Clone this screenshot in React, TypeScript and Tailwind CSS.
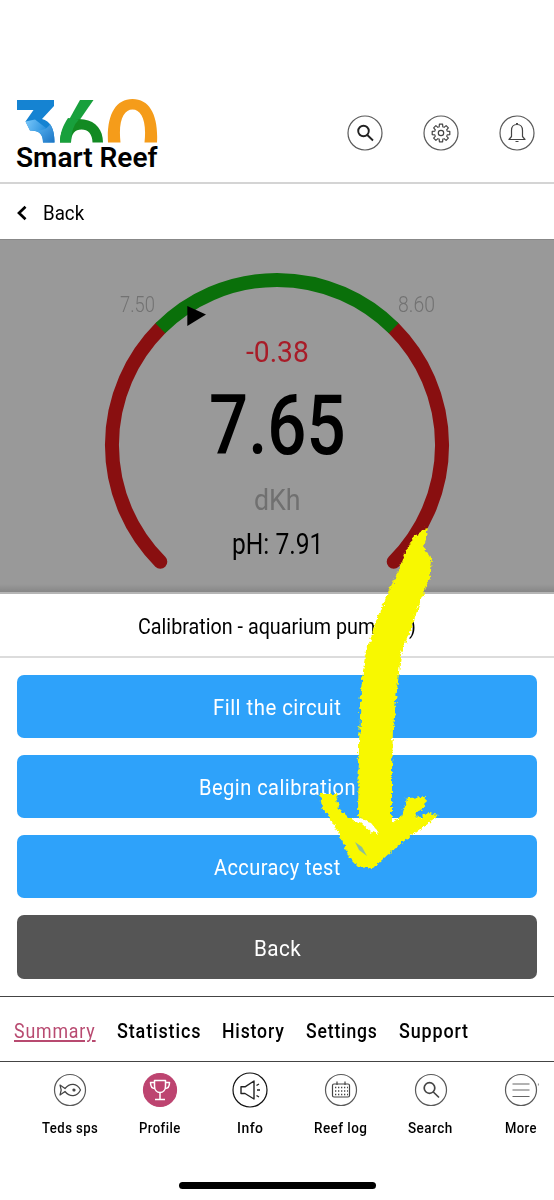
import { useLayoutEffect, useRef, useState } from "react";
import type { ReactNode } from "react";
import clsx from "clsx";

type FitTextProps = {
  className?: string;
  textClassName?: string;
  children: string;
};

// Squeezes one line of text into the width of its box
const FitText = ({ className, textClassName, children }: FitTextProps) => {
  const boxRef = useRef<HTMLSpanElement>(null);
  const textRef = useRef<HTMLSpanElement>(null);
  const [scale, setScale] = useState(1);

  useLayoutEffect(() => {
    if (!boxRef.current || !textRef.current) return;
    setScale(boxRef.current.clientWidth / textRef.current.offsetWidth);
  }, [children]);

  return (
    <span ref={boxRef} className={clsx("block shrink-0 whitespace-nowrap", className)}>
      <span
        ref={textRef}
        className={clsx("inline-block origin-left", textClassName)}
        style={{ transform: `scaleX(${scale})` }}
      >
        {children}
      </span>
    </span>
  );
};

const Logo = () => (
  <svg width="142" height="44" viewBox="16 99 142 44">
    <defs>
      <linearGradient id="spur" x1="0" y1="0" x2="1" y2="0.300">
        <stop offset="0" stopColor="#7cc8fa" />
        <stop offset="1" stopColor="#2f95e0" />
      </linearGradient>
      <linearGradient id="bowl" x1="0" y1="0" x2="1" y2="1">
        <stop offset="0" stopColor="#5db8f4" />
        <stop offset="1" stopColor="#1b74c4" />
      </linearGradient>
    </defs>
    <path d="M17 100H54V106L42 119C50 121 54.500 128 54.500 142.500H43C43 135 40 130.500 30 130.500L25.500 121.500L33.500 110H17Z" fill="#1583d2" />
    <path d="M25.500 121.500L35 119.500L46 128L41 134C39 131.500 36 130.500 30 130.500Z" fill="url(#spur)" />
    <path d="M35 131C44 131 49 127 50 124C53.500 129 54.500 135 54.500 142.500H43C43 136 41 132 35 131Z" fill="url(#bowl)" />
    <path d="M80 100H93.500L80 119.500L66 125Z" fill="#18a03c" />
    <path d="M60 142.500C60 133 64 126 69 121.500Q75 118 84 119.500C96 121 103 130 103 142.500H92.500C92.500 134 88 129.500 81.500 129.500S71 134 71 142.500Z" fill="#138a22" />
    <path d="M60 142.500C60 133 63 125.500 68 118L79 119.500Q71 127 71 142.500Z" fill="#18a03c" />
    <path d="M108 142.500C106.500 116 115 99 132.500 99S158.500 116 157 142.500H144.500C147 120 141 109.500 132.500 109.500S118 120 120.500 142.500Z" fill="#f59c1a" />
  </svg>
);

const SearchGlyph = () => (
  <>
    <circle cx="-1.500" cy="-2" r="5.300" />
    <path d="M2.300 2L8 7.500" />
  </>
);

const teeth = [0, 45, 90, 135, 180, 225, 270, 315];

const GearGlyph = () => (
  <>
    <circle r="2.700" />
    {teeth.map((angle) => (
      <path
        key={angle}
        transform={`rotate(${angle})`}
        d="M-2.500 -6L-1.800 -6.200L-1.600 -8.800H1.600L1.800 -6.200L2.500 -6"
      />
    ))}
  </>
);

const BellGlyph = () => (
  <>
    <path d="M-8 6.500H8L5.500 3.500V-2.500C5.500 -6 3.500 -8.500 0 -8.500S-5.500 -6 -5.500 -2.500V3.500Z" />
    <path d="M-1 -9.300H1M-1.500 8.500H1.500" />
  </>
);

const FishGlyph = () => (
  <>
    <path d="M-5 -1.500C0 -7.500 7 -7 10.500 0C7 7 0 7.500 -5 1.500L-10 5L-8.800 0L-10 -5Z" />
    <circle cx="4" cy="0" r="1" fill="#333" />
  </>
);

const TrophyGlyph = () => (
  <>
    <path d="M-5.500 -9.500H5.500V-4C5.500 0 3 2.500 0 2.500S-5.500 0 -5.500 -4Z" />
    <path d="M-5.500 -7.500H-9.500C-9.500 -3.500 -8 -1.500 -5 -1.500M5.500 -7.500H9.500C9.500 -3.500 8 -1.500 5 -1.500M0 2.500V9M-5 9.500H5" />
  </>
);

const SpeakerGlyph = () => (
  <>
    <path d="M-9 -3.200H-5L4 -9V9L-5 3.500H-9Z" />
    <path d="M6.500 -4.500L9 -6M7 0H10M6.500 5.500L9 7" />
  </>
);

const CalendarGlyph = () => (
  <>
    <rect x="-8.500" y="-6" width="17" height="13" rx="1.500" />
    <path d="M-4 -8.500V-5M4 -8.500V-5" />
    <path d="M-6 -2.500H7M-6 1H7M-6 4.500H7" strokeDasharray="1.300 1.700" strokeWidth="1.500" />
  </>
);

const MenuGlyph = () => <path d="M-8.500 -6H8.500M-8.500 0H8.500M-8.500 6.500H8.500" />;

type RoundIconProps = {
  children: ReactNode;
  r?: number;
  stroke?: string;
  fill?: string;
  glyph?: string;
  glyphWidth?: number;
};

const RoundIcon = ({
  children,
  r = 17,
  stroke = "#5a5a5a",
  fill = "none",
  glyph = "#444",
  glyphWidth = 1.2,
}: RoundIconProps) => (
  <svg width="36" height="36" viewBox="-18 -18 36 36" className="shrink-0">
    <circle r={r} fill={fill} stroke={stroke} strokeWidth="1.200" />
    <g fill="none" stroke={glyph} strokeWidth={glyphWidth} strokeLinejoin="round">
      {children}
    </g>
  </svg>
);

const Header = () => (
  <header className="flex h-[184px] items-start justify-between border-b-2 border-[#d4d4d4] pr-[19px] pl-4 pt-[99px]">
    <div>
      <Logo />
      <FitText className="w-[141px] text-[28px] leading-[30px] font-semibold">Smart Reef</FitText>
    </div>
    <div className="flex gap-10 pt-4">
      <RoundIcon glyph="#222" glyphWidth={1.9}>
        <SearchGlyph />
      </RoundIcon>
      <RoundIcon>
        <GearGlyph />
      </RoundIcon>
      <RoundIcon>
        <BellGlyph />
      </RoundIcon>
    </div>
  </header>
);

const BackRow = () => (
  <div className="flex h-[55px] items-center pl-[17px]">
    <svg width="10" height="16" viewBox="0 0 10 16" className="mt-0.5 mr-4">
      <path d="M8.500 1.800L2 8L8.500 14.200" fill="none" stroke="#000" strokeWidth="2.700" />
    </svg>
    <FitText className="mt-0.5 w-[41px] text-[21px] leading-7">Back</FitText>
  </div>
);

const Gauge = () => (
  <section className="grid h-[355px] border-t border-b-2 border-t-[#888] border-b-[#b5b5b5] bg-[#999]">
    <svg width="554" height="352" viewBox="0 240 554 352" className="col-start-1 row-start-1">
      <defs>
        <linearGradient id="edge" x1="0" y1="0" x2="0" y2="1">
          <stop offset="0" stopColor="#000" stopOpacity="0" />
          <stop offset="1" stopColor="#000" stopOpacity="0.120" />
        </linearGradient>
      </defs>
      <rect x="0" y="584" width="554" height="8" fill="url(#edge)" />
      <g fill="none" strokeWidth="14">
        <path d="M160.300 561.700A165 165 0 0 1 160.300 328.300" stroke="#890f10" strokeLinecap="round" />
        <path d="M393.700 561.700A165 165 0 0 0 393.700 328.300" stroke="#890f10" strokeLinecap="round" />
        <path d="M160.300 328.300A165 165 0 0 1 393.700 328.300" stroke="#0a700a" />
      </g>
      <path d="M187.300 306V326L206 314.500Z" />
    </svg>
    <div className="col-start-1 row-start-1 flex flex-col items-center pt-[50px]">
      <div className="flex w-[315px] justify-between text-[22px] leading-[29px] font-light text-[#727272]">
        <FitText className="w-[35px]">7.50</FitText>
        <FitText className="w-[37px]">8.60</FitText>
      </div>
      <FitText className="mt-[15px] w-[63px] text-[30px] leading-[36px] text-[#a81c28]">-0.38</FitText>
      <FitText className="mt-[8px] w-[137px] text-[84px] leading-[96px]" textClassName="font-medium">
        7.65
      </FitText>
      <FitText className="mt-[8px] w-[47px] text-[29px] leading-[36px] text-[#707070]">dKh</FitText>
      <FitText className="mt-[8px] w-[91px] text-[30px] leading-[36px]">pH: 7.91</FitText>
    </div>
  </section>
);

const actions = [
  { label: "Fill the circuit", width: "w-[128px]", color: "bg-[#2ea2fa]" },
  { label: "Begin calibration", width: "w-[157px]", color: "bg-[#2ea2fa]" },
  { label: "Accuracy test", width: "w-[127px]", color: "bg-[#2ea2fa]" },
  { label: "Back", width: "w-[47px]", color: "bg-[#555]" },
];

const ActionSheet = () => (
  <section>
    <div className="flex h-[64px] justify-center border-b-2 border-[#dcdcdc] pt-[18px]">
      <FitText className="w-[278px] text-[22px] leading-[29px]">Calibration - aquarium pump (b)</FitText>
    </div>
    <div className="flex flex-col gap-[17px] px-[17px] pt-[16.500px] pb-[17px]">
      {actions.map(({ label, width, color }) => (
        <button
          key={label}
          className={clsx("flex h-[63.300px] items-center justify-center rounded-[7px] text-white", color)}
        >
          <FitText className={clsx("mt-[3px] text-[22px] leading-[28px] tracking-[0.500px]", width)}>
            {label}
          </FitText>
        </button>
      ))}
    </div>
  </section>
);

const tabs = [
  { label: "Summary", width: "w-[82px]", active: true },
  { label: "Statistics", width: "w-[84px]" },
  { label: "History", width: "w-[63px]" },
  { label: "Settings", width: "w-[72px]" },
  { label: "Support", width: "w-[70px]" },
];

const Tabs = () => (
  <nav className="flex h-[66px] items-center gap-[21px] border-y border-[#444] pt-1 pl-3.5 text-[21px] leading-[28px] tracking-[1px]">
    {tabs.map(({ label, width, active }) => (
      <FitText
        key={label}
        className={clsx(width, active ? "text-[#b84a70]" : "font-medium")}
        textClassName={active ? "underline decoration-2 underline-offset-2" : undefined}
      >
        {label}
      </FitText>
    ))}
  </nav>
);

type BottomItemProps = {
  label: string;
  width: string;
  children: ReactNode;
};

const BottomItem = ({ label, width, children }: BottomItemProps) => (
  <div className="flex w-[90.200px] shrink-0 flex-col items-center">
    {children}
    <FitText className={clsx("mt-[10px] text-[15px] leading-5 font-medium tracking-[0.5px]", width)}>
      {label}
    </FitText>
  </div>
);

const BottomBar = () => (
  <nav className="flex h-[120px] overflow-hidden pt-[10px] pl-[25px]">
    <BottomItem label="Teds sps" width="w-[56px]">
      <RoundIcon r={15.5}>
        <FishGlyph />
      </RoundIcon>
    </BottomItem>
    <BottomItem label="Profile" width="w-[42px]">
      <RoundIcon r={16.5} stroke="#bd4470" fill="#bd4470" glyph="#fff" glyphWidth={1.5}>
        <TrophyGlyph />
      </RoundIcon>
    </BottomItem>
    <BottomItem label="Info" width="w-[26px]">
      <RoundIcon r={17} stroke="#111" glyph="#222" glyphWidth={1.4}>
        <SpeakerGlyph />
      </RoundIcon>
    </BottomItem>
    <BottomItem label="Reef log" width="w-[53px]">
      <RoundIcon r={15.5}>
        <CalendarGlyph />
      </RoundIcon>
    </BottomItem>
    <BottomItem label="Search" width="w-[45px]">
      <RoundIcon r={15.5} glyphWidth={1.7}>
        <SearchGlyph />
      </RoundIcon>
    </BottomItem>
    <BottomItem label="More" width="w-[32px]">
      <RoundIcon r={15.5} glyph="#666">
        <MenuGlyph />
        <path d="M17.500 -6.500V-4.500" stroke="#999" />
      </RoundIcon>
    </BottomItem>
  </nav>
);

// Hand-drawn marker arrow that lies over the sheet
const MarkerArrow = () => (
  <svg
    width="554"
    height="1200"
    viewBox="0 0 554 1200"
    className="pointer-events-none absolute top-0 left-0"
  >
    <defs>
      <filter id="rough" x="300" y="500" width="160" height="400" filterUnits="userSpaceOnUse">
        <feTurbulence type="fractalNoise" baseFrequency="0.300" numOctaves="2" seed="4" />
        <feDisplacementMap in="SourceGraphic" scale="6" xChannelSelector="R" yChannelSelector="G" />
        <feGaussianBlur stdDeviation="0.500" />
      </filter>
    </defs>
    <g filter="url(#rough)" fill="#f8f800">
      <path d="M428 527L424 548L432 560L430 578L421 600L411 628L401 655L397 690L393 728L392 770L392 822L402 816L407 798L426 797L425 808L415 812L417 818L428 813L439 815L424 826L408 838L391 852L374 867L360 868L349 857L340 836L331 820L322 808L320 794L336 794L339 808L350 819L362 823L372 832L379 835L376 829L364 819L358 817L359 745L361 690L365 655L375 625L389 590L398 572L405 553L413 537Z" />
    </g>
    <path d="M361 820L371 823L379 833L370 829Z" fill="#fff" />
    <path d="M355 842L362 847L367 856L359 850Z" fill="#8abf9a" />
  </svg>
);

const App = () => {
  return (
    <div className="relative h-[1200px] w-[554px] overflow-hidden bg-white font-['Roboto','Liberation_Sans',sans-serif] text-black">
      <Header />
      <BackRow />
      <Gauge />
      <ActionSheet />
      <Tabs />
      <BottomBar />
      <div className="mx-auto h-[7px] w-[197px] rounded-full bg-black" />
      <MarkerArrow />
    </div>
  );
};

export default App;
